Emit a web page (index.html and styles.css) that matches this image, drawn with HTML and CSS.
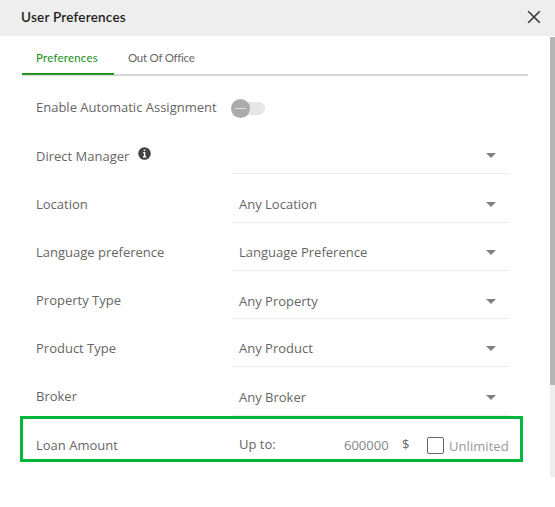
FILE: index.html
```html
<!DOCTYPE html>
<html lang="en">
<head>
<meta charset="utf-8">
<title>User Preferences</title>
<link rel="stylesheet" href="styles.css">
</head>
<body>
<div class="dialog">
  <header class="header">
    <h1 class="title">User Preferences</h1>
    <svg class="close" viewBox="0 0 14 14"><path d="M1.2 1.2 12.8 12.8M12.8 1.2 1.2 12.8"/></svg>
  </header>
  <div class="body">
    <main class="content">
      <nav class="tabs">
        <span class="tab active">Preferences</span>
        <span class="tab">Out Of Office</span>
      </nav>
      <div class="rows">
        <div class="row">
          <div class="label"><span>Enable Automatic Assignment</span></div>
          <div class="toggle"><span class="knob"></span></div>
        </div>
        <div class="row">
          <div class="label low"><span>Direct Manager</span>
            <svg class="info" viewBox="0 0 13 13"><circle cx="6.5" cy="6.5" r="6.3"/><path d="M5.2 5.6h1.4v4M5 9.7h3.2"/><path d="M5.7 3.4h1.6"/></svg>
          </div>
          <div class="select"><span></span><i class="caret"></i></div>
        </div>
        <div class="row">
          <div class="label"><span>Location</span></div>
          <div class="select"><span>Any Location</span><i class="caret"></i></div>
        </div>
        <div class="row">
          <div class="label"><span>Language preference</span></div>
          <div class="select"><span>Language Preference</span><i class="caret"></i></div>
        </div>
        <div class="row">
          <div class="label"><span>Property Type</span></div>
          <div class="select low"><span>Any Property</span><i class="caret"></i></div>
        </div>
        <div class="row">
          <div class="label"><span>Product Type</span></div>
          <div class="select"><span>Any Product</span><i class="caret"></i></div>
        </div>
        <div class="row">
          <div class="label high"><span>Broker</span></div>
          <div class="select"><span>Any Broker</span><i class="caret"></i></div>
        </div>
        <div class="row loan">
          <div class="label"><span>Loan Amount</span></div>
          <div class="amount">
            <span class="upto">Up to:</span>
            <span class="value">600000</span>
            <span class="currency">$</span>
            <span class="checkbox"></span>
            <span class="unlimited">Unlimited</span>
          </div>
        </div>
      </div>
    </main>
    <div class="scrollbar"><div class="thumb"></div></div>
  </div>
</div>
</body>
</html>
```
FILE: styles.css
```css
* { box-sizing: border-box; }

body {
  margin: 0;
  background: #fff;
  color: #666;
  font: 13px/20px "Open Sans", sans-serif;
}

.dialog { width: 555px; height: 507px; overflow: hidden; }

.header {
  display: flex;
  align-items: center;
  justify-content: space-between;
  height: 36px;
  padding: 0 14px 0 21px;
  background: #eee;
}

.title {
  margin: -2px 0 0;
  color: #1d1d1d;
  font: 600 13.5px/20px Lato, sans-serif;
  letter-spacing: 0.22px;
}

.close { width: 14px; height: 14px; margin-top: -2px; fill: none; stroke: #333; stroke-width: 1.5; }

.body { display: flex; height: 441px; padding-top: 1px; }
.content { flex: 1; }

.tabs {
  display: flex;
  width: 506px;
  height: 39px;
  margin-left: 22px;
  border-bottom: 2px solid #d6d6d6;
  font: 11.5px/18px Lato, sans-serif;
}

.tab { height: 37px; padding: 12px 15px 0 14px; letter-spacing: -0.27px; white-space: nowrap; }
.tab.active { width: 92px; border-bottom: 1px solid #108a10; box-shadow: 0 1px #3fa03f; color: #158f1c; letter-spacing: 0.22px; }

.rows { display: grid; grid-auto-rows: 48.25px; padding: 7px 0 0 22px; }
.row { display: grid; grid-template-columns: 210px 278px; }

.label { display: flex; align-items: flex-start; padding: 14px 0 0 14px; white-space: nowrap; }
.label.low { padding-top: 15px; }
.label.high { padding-top: 13px; }
.info { width: 13px; height: 13px; margin: 1px 0 0 9px; }
.info circle { fill: #444; }
.info path { fill: none; stroke: #fff; stroke-width: 1.4; }

.toggle { width: 33px; height: 13px; margin-top: 19px; border-radius: 7px; background: #e6e6e6; }
.knob { display: flex; align-items: center; justify-content: center; width: 19px; height: 19px; margin: -3px 0 0 -1px; border-radius: 50%; background: #ababab; }
.knob::after { width: 11px; height: 1px; background: #ddd; content: ""; }

.select {
  display: flex;
  align-items: flex-start;
  justify-content: space-between;
  height: 43px;
  padding: 14px 14px 0 7px;
  border-bottom: 1px solid #eee;
}
.select.low { padding-top: 15px; }
.caret { margin-top: 8px; border: 5px solid transparent; border-top-color: #808080; border-bottom: 0; }

/* Highlighted row */
.loan {
  width: 503px;
  height: 46px;
  margin: -5px 0 0 -2px;
  border: 3px solid #04b53b;
}
.loan .label { padding: 16px 0 0 13px; }
.amount { display: flex; padding: 16px 0 0 6px; }
.upto { width: 105px; margin-top: -1px; }
.value { width: 58px; color: #858585; }
.currency { width: 25px; margin-top: -1px; }
.checkbox { width: 17px; height: 17px; margin: 2px 5px 0 0; border: 1px solid #666; border-radius: 2px; }
.unlimited { margin-top: 1px; color: #999; letter-spacing: 0.05px; }

.scrollbar { width: 5px; background: #eee; }
.thumb { height: 348px; background: #b5b5b5; }
```
